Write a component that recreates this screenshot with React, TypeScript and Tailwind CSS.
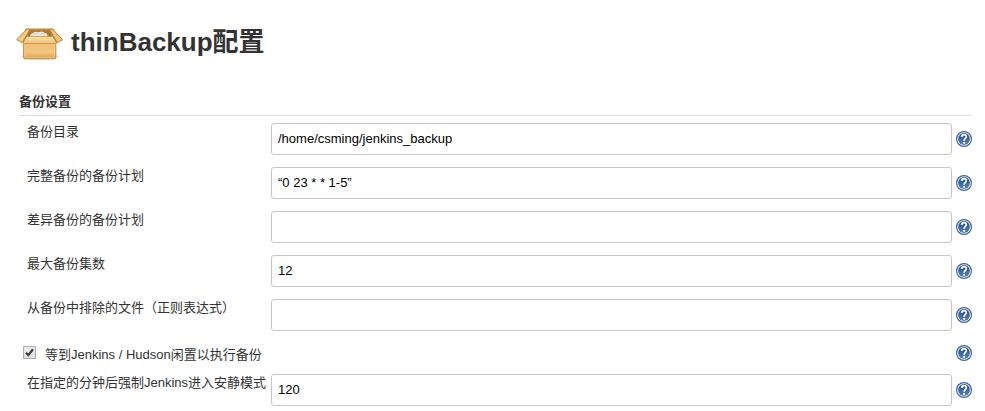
import React from "react";

function BoxIcon() {
  return (
    <svg className="h-12 w-12 shrink-0" viewBox="0 0 48 48">
      <defs>
        <linearGradient id="front" x1="0" y1="0" x2="0" y2="1">
          <stop offset="0" stopColor="#dba650" />
          <stop offset="0.3" stopColor="#eebf74" />
          <stop offset="0.7" stopColor="#f0c67f" />
          <stop offset="1" stopColor="#dc9f45" />
        </linearGradient>
        <linearGradient id="flap" x1="0" y1="0" x2="0" y2="1">
          <stop offset="0" stopColor="#fae0aa" />
          <stop offset="1" stopColor="#efc27a" />
        </linearGradient>
        <radialGradient id="shade">
          <stop offset="0.6" stopColor="#8a7a60" stopOpacity="0.45" />
          <stop offset="1" stopColor="#8a7a60" stopOpacity="0" />
        </radialGradient>
      </defs>
      <ellipse cx="24" cy="37.500" rx="21" ry="3.500" fill="url(#shade)" />
      <path d="M10 10H37L41 20H6Z" fill="#c68f40" stroke="#b0762a" strokeWidth="0.8" />
      <path d="M12 18V14L14.500 11.500H33L35.500 14V18Z" fill="#a87730" />
      <path d="M14.500 18Q13.500 14.500 17 14Q19 12 22.500 13.200Q26 11.800 28.500 13.700Q32 14 31.500 18Z" fill="#e9e6dd" />
      <path d="M17 15.500Q19.500 13.500 22 15.500M24.500 15.500Q27 13.500 29 15.500" fill="none" stroke="#cbc4b3" strokeWidth="0.8" />
      <path d="M7.700 19H39.800V38.500Q39.800 39.800 38.500 39.800H9Q7.700 39.800 7.700 38.500Z" fill="url(#front)" stroke="#b57622" strokeWidth="0.9" />
      <path d="M8.700 25V37.700Q8.700 38.800 9.800 38.800H37.700Q38.800 38.800 38.800 37.700V25" fill="none" stroke="#f8dca7" strokeWidth="0.8" opacity="0.7" />
      <path d="M10.500 17.500H37L40.800 24.500H6.700Z" fill="url(#flap)" stroke="#c38935" strokeWidth="0.7" strokeLinejoin="round" />
      <path d="M11 10L0.800 20.800L6.300 23.500L14 10.500Z" fill="#f1ca88" stroke="#b67a2a" strokeWidth="0.9" strokeLinejoin="round" />
      <path d="M36.500 10L46.600 20.800L41.200 23.500L33.500 10.500Z" fill="#edc27c" stroke="#b67a2a" strokeWidth="0.9" strokeLinejoin="round" />
    </svg>
  );
}

function HelpIcon() {
  return (
    <svg className="h-4 w-4 shrink-0" viewBox="0 0 16 16">
      <defs>
        <linearGradient id="help" x1="0" y1="0" x2="0" y2="1">
          <stop offset="0" stopColor="#22478b" />
          <stop offset="1" stopColor="#5585bd" />
        </linearGradient>
      </defs>
      <circle cx="8" cy="8" r="7.400" fill="#fff" stroke="#3c639f" strokeWidth="1.200" />
      <circle cx="8" cy="8" r="5.900" fill="url(#help)" />
      <path d="M5.700 6C5.700 2.800 10.500 2.900 10.300 5.700C10.200 7.500 8.100 7.700 8.100 9.700" fill="none" stroke="#fff" strokeWidth="1.700" />
      <circle cx="8.100" cy="11.900" r="1.050" fill="#fff" />
    </svg>
  );
}

function Row({ label, value, last }: { label: string; value: string; last?: boolean }) {
  return (
    <div className={last ? "flex h-8" : "mb-3 flex h-8"}>
      <div className="w-[252px] shrink-0 pt-px pl-2 leading-4 whitespace-nowrap">{label}</div>
      <input
        type="text"
        defaultValue={value}
        className="h-8 w-[681px] rounded-[3px] border border-[#c6c6c6] bg-white px-1.5 pb-0.5 text-[13px] text-black outline-none"
      />
      <div className="ml-1 flex items-center">
        <HelpIcon />
      </div>
    </div>
  );
}

export default function App() {
  return (
    <main className="h-[411px] w-[985px] overflow-hidden bg-white font-['Liberation_Sans','Noto_Sans_CJK_SC',sans-serif] text-[13px] text-[#333]">
      <header className="flex h-[90px] items-start pt-[19px] pl-4">
        <BoxIcon />
        <h1 className="ml-[7px] pt-1 text-[26px] leading-[38px] font-bold">thinBackup配置</h1>
      </header>
      <section className="ml-[19px] w-[953px]">
        <h2 className="h-[26px] border-b border-[#ddd] pt-1 leading-4 font-bold">备份设置</h2>
        <div className="pt-[7px]">
          <Row label="备份目录" value="/home/csming/jenkins_backup" />
          <Row label="完整备份的备份计划" value="“0 23 * * 1-5”" />
          <Row label="差异备份的备份计划" value="" />
          <Row label="最大备份集数" value="12" />
          <Row label="从备份中排除的文件（正则表达式）" value="" />
        </div>
        <div className="flex h-[31px] items-start justify-between">
          <label className="flex pl-1 leading-4">
            <span className="mt-[3px] h-[13px] w-[13px] border border-[#adadad] bg-linear-to-b from-[#efefef] to-[#dedede]">
              <svg className="h-[11px] w-[11px]" viewBox="0 0 11 11">
                <path d="M2 5.800L4.300 8.200L9 2.300" fill="none" stroke="#3c3c3c" strokeWidth="2.200" />
              </svg>
            </span>
            <span className="ml-[9px] pt-1">等到Jenkins / Hudson闲置以执行备份</span>
          </label>
          <div className="pt-[2px]">
            <HelpIcon />
          </div>
        </div>
        <Row label="在指定的分钟后强制Jenkins进入安静模式" value="120" last />
      </section>
    </main>
  );
}
